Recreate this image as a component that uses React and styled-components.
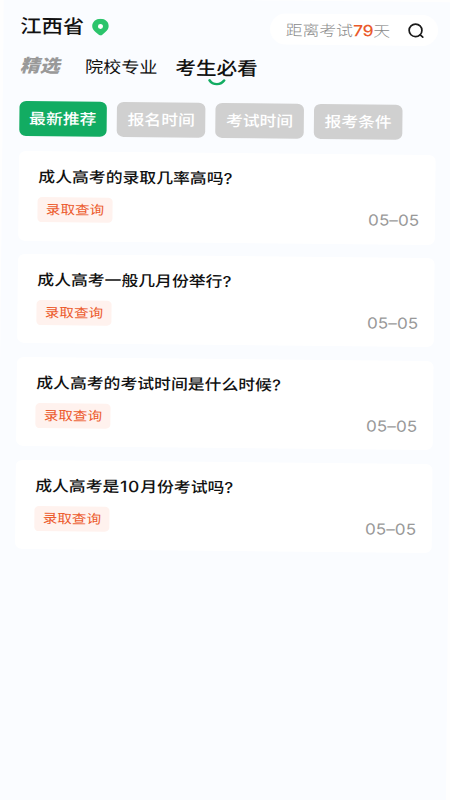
import styled, { createGlobalStyle } from 'styled-components';

const GlobalStyle = createGlobalStyle`
  * {
    box-sizing: border-box;
  }
  body {
    margin: 0;
    background: #fefefe;
    overflow: hidden;
  }
`;

const Page = styled.div`
  width: 450px;
  height: 800px;
  overflow: hidden;
`;
const Screen = styled.main`
  width: 401.5px;
  height: 820px;
  padding: 13px 14px 0 14.5px;
  background: #fafcff;
  color: #111;
  font-family: Inter, 'Noto Sans CJK SC', sans-serif;
  white-space: nowrap;
  transform-origin: 0 0;
  transform: translate(3.8px, -2.3px) rotate(0.58deg) scaleX(1.12);
`;

const Header = styled.header`
  display: flex;
  align-items: center;
  justify-content: space-between;
  height: 31px;
`;
const Region = styled.div`
  display: flex;
  align-items: center;
  gap: 7px;
  padding-left: 0.5px;
  font-size: 19px;
  font-weight: 500;
  line-height: 32px;
`;
const SearchBox = styled.div`
  display: flex;
  align-items: center;
  justify-content: space-between;
  width: 150px;
  height: 31px;
  padding: 0 12px 0 14.5px;
  border-radius: 14px / 15.5px;
  background: #fff;
  color: #8a8a8a;
  font-size: 15px;
  font-weight: 300;
`;
const Days = styled.span`
  color: #ea5a2b;
  font-size: 15.6px;
  font-weight: 500;
  letter-spacing: -0.2px;
`;

const Tabs = styled.nav`
  display: flex;
  align-items: center;
  height: 30px;
  margin-top: 9.2px;
  padding-left: 0.5px;
`;
const Tab = styled.div`
  position: relative;
  margin-right: 16px;
  font-size: ${({ $active }) => ($active ? '18.4px' : '16.2px')};
  font-weight: ${({ $active }) => ($active ? 500 : 400)};
  line-height: 30px;
`;
const FeaturedTab = styled.div`
  margin-right: 22.7px;
  color: #999;
  font-size: 17.7px;
  font-style: italic;
  font-weight: 900;
  line-height: 30px;
`;
const Smile = styled.svg`
  position: absolute;
  left: 29.5px;
  top: 25.5px;
`;

const Chips = styled.div`
  display: flex;
  gap: 9.4px;
  margin-top: 20px;
`;
const Chip = styled.div`
  width: 78.5px;
  height: 34.5px;
  border-radius: 6px;
  background: ${({ $active }) => ($active ? '#12ac62' : '#d0d0d0')};
  color: #fff;
  font-size: 15px;
  font-weight: 500;
  line-height: 36px;
  text-align: center;
`;

const List = styled.div`
  display: flex;
  flex-direction: column;
  gap: 13.4px;
  margin-top: 15.4px;
`;
const Card = styled.article`
  display: flex;
  justify-content: space-between;
  width: 372.5px;
  height: 89.5px;
  padding: 14px 14px 0 18px;
  border-radius: 6px;
  background: #fff;
`;
const Title = styled.h2`
  margin: 0;
  font-size: 15px;
  font-weight: 500;
  letter-spacing: 0.03px;
  line-height: 23px;
`;
const Digits = styled.span`
  margin-left: 0.5px;
  font-size: 15.5px;
  letter-spacing: 0.8px;
`;
const Tag = styled.span`
  display: block;
  width: 67px;
  height: 25px;
  margin: 9px 0 0 -0.5px;
  border-radius: 4px;
  background: #fff2ee;
  color: #ec5a2c;
  font-size: 13px;
  line-height: 25px;
  text-align: center;
`;
const DateText = styled.time`
  padding-top: 41px;
  color: #999;
  font-size: 15.2px;
  letter-spacing: 0.1px;
  line-height: 22px;
`;

const questions = [
  '成人高考的录取几率高吗?',
  '成人高考一般几月份举行?',
  '成人高考的考试时间是什么时候?',
  '成人高考是10月份考试吗?',
];

const PinIcon = () => (
  <svg width="15.2" height="17" viewBox="0 0 17 17" preserveAspectRatio="none">
    <path
      d="M8.5 0C3.8 0 .2 3.3.2 7.3c0 2.5 1.3 4.2 3.6 6.2l3.1 2.7c.9.8 2.3.8 3.2 0l3.1-2.7c2.3-2 3.6-3.7 3.6-6.2C16.8 3.3 13.2 0 8.5 0z"
      fill="#2bc46b"
    />
    <circle cx="8.5" cy="7.7" r="2.5" fill="#fff" />
  </svg>
);

const SearchIcon = () => (
  <svg width="14.5" height="16" viewBox="0 0 16 16" preserveAspectRatio="none" fill="none" stroke="#1b1b1b" strokeWidth="1.7" strokeLinecap="round">
    <circle cx="7.6" cy="7.5" r="6.3" />
    <path d="M12.3 12l2.5 2.2" />
  </svg>
);

const App = () => {
  return (
    <Page>
      <GlobalStyle />
      <Screen>
        <Header>
          <Region>
            江西省
            <PinIcon />
          </Region>
          <SearchBox>
            <span>距离考试<Days>79</Days>天</span>
            <SearchIcon />
          </SearchBox>
        </Header>
        <Tabs>
          <FeaturedTab>精选</FeaturedTab>
          <Tab>院校专业</Tab>
          <Tab $active>
            考生必看
            <Smile width="16" height="8" viewBox="0 0 16 8" fill="none">
              <path d="M1.5 1.5c3 5 10 5 13 0" stroke="#12ac62" strokeWidth="2.4" strokeLinecap="round" />
            </Smile>
          </Tab>
        </Tabs>
        <Chips>
          <Chip $active>最新推荐</Chip>
          <Chip>报名时间</Chip>
          <Chip>考试时间</Chip>
          <Chip>报考条件</Chip>
        </Chips>
        <List>
          {questions.map((question) => (
            <Card key={question}>
              <div>
                <Title>
                  {question.split(/(\d+)/).map((part, i) => (i % 2 ? <Digits key={i}>{part}</Digits> : part))}
                </Title>
                <Tag>录取查询</Tag>
              </div>
              <DateText>05–05</DateText>
            </Card>
          ))}
        </List>
      </Screen>
    </Page>
  );
};

export default App;
